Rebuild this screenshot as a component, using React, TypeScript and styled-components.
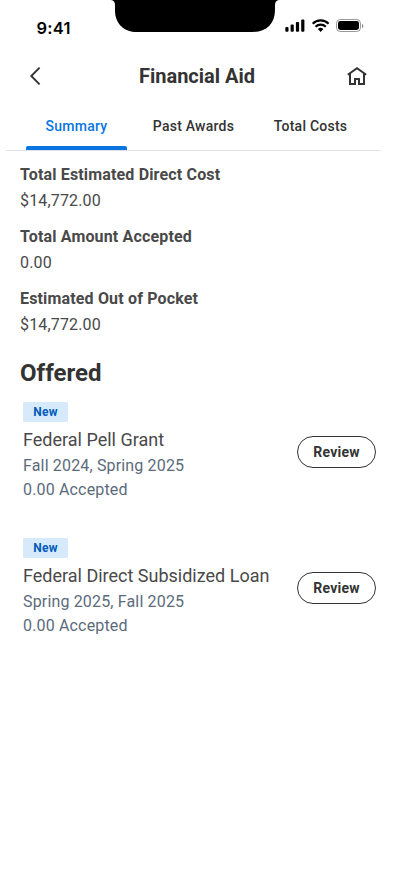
import React from "react";
import styled, { createGlobalStyle } from "styled-components";

const GlobalStyle = createGlobalStyle`
  *, *::before, *::after { box-sizing: border-box; }
  body { margin: 0; background: #fff; font-family: Roboto, sans-serif; color: #333; }
  h1, h2, p, dl, dt, dd, ul { margin: 0; padding: 0; }
  button { font-family: inherit; color: inherit; background: none; border: 0; padding: 0; }
`;

const Screen = styled.div`
  width: 402px;
  height: 874px;
  overflow: hidden;
  background: #fff;
`;

const StatusBar = styled.div`
  display: grid;
  grid-template-columns: 111px 168px 1fr;
  height: 50px;
`;

const Clock = styled.span`
  padding: 18px 0 0 36.5px;
  font: 600 16.5px/20px Inter, sans-serif;
  letter-spacing: 0.2px;
  color: #000;
`;

const StatusIcons = styled.svg`
  display: block;
  margin: 17px 0 0 5px;
`;

const Header = styled.header`
  display: grid;
  grid-template-columns: 24px 1fr 24px;
  align-items: center;
  height: 52px;
  padding: 0 33px 0 24px;
`;

const IconButton = styled.button`
  display: flex;
  width: 24px;
  height: 24px;
`;

const Title = styled.h1`
  padding-left: 1px;
  text-align: center;
  font-size: 20px;
  line-height: 28px;
  font-weight: 700;
`;

const Tabs = styled.nav`
  display: flex;
  height: 49px;
  width: 375px;
  margin-left: 6px;
  padding-left: 20px;
  border-bottom: 1px solid #dfe2ea;
`;

const Tab = styled.button<{ $active?: boolean; $width: number }>`
  display: flex;
  flex: none;
  flex-direction: column;
  align-items: center;
  justify-content: space-between;
  width: ${(p) => p.$width}px;
  padding-top: 12px;
  font-size: 14px;
  line-height: 24px;
  font-weight: 500;
  letter-spacing: 0.24px;
  color: ${(p) => (p.$active ? "#0875e1" : "#333")};

  &::after {
    content: "";
    width: 100%;
    height: 4px;
    border-radius: 2px 2px 0 0;
    background: ${(p) => (p.$active ? "#0875e1" : "transparent")};
  }
`;

const Totals = styled.dl`
  padding: 12px 20px 0;
`;

const Total = styled.div`
  height: 62px;
  font-size: 16px;
  line-height: 24px;
  letter-spacing: 0.16px;
  color: #494949;
`;

const TotalLabel = styled.dt`
  height: 26px;
  font-weight: 700;
`;

const TotalValue = styled.dd``;

const SectionTitle = styled.h2`
  margin: 8px 20px 0;
  font-size: 24px;
  line-height: 32px;
  font-weight: 700;
`;

const Awards = styled.ul`
  list-style: none;
  padding: 13px 26px 0 23px;
`;

const Award = styled.li`
  display: flex;
  justify-content: space-between;
  height: 136px;
`;

const AwardInfo = styled.div`
  white-space: nowrap;
`;

const Badge = styled.span`
  display: block;
  width: 45px;
  height: 20px;
  border-radius: 2px;
  background: #d7eafc;
  color: #005cb9;
  text-align: center;
  font-size: 12px;
  line-height: 20px;
  font-weight: 700;
  letter-spacing: 0.3px;
`;

const AwardName = styled.p`
  margin-top: 4px;
  font-size: 18px;
  line-height: 28px;
  color: #494949;
`;

const AwardDetail = styled.p`
  font-size: 16px;
  line-height: 24px;
  letter-spacing: 0.16px;
  color: #5b6b7b;
`;

const ReviewButton = styled.button`
  flex: none;
  width: 79px;
  height: 32px;
  margin-top: 34px;
  border: 1px solid #333;
  border-radius: 16px;
  font-size: 14px;
  line-height: 20px;
  font-weight: 700;
  letter-spacing: 0.24px;
`;

const totals = [
  { label: "Total Estimated Direct Cost", value: "$14,772.00" },
  { label: "Total Amount Accepted", value: "0.00" },
  { label: "Estimated Out of Pocket", value: "$14,772.00" },
];

const awards = [
  { name: "Federal Pell Grant", terms: "Fall 2024, Spring 2025" },
  { name: "Federal Direct Subsidized Loan", terms: "Spring 2025, Fall 2025" },
];

const Notch = () => (
  <svg width="168" height="32" viewBox="0 0 168 32">
    <path d="M0 0Q4 .5 4 5V10C4 24 13 32 26 32H142C155 32 164 24 164 10V5Q164 .5 168 0Z" fill="#000" />
  </svg>
);

const DeviceStatus = () => (
  <StatusIcons width="82" height="18" viewBox="0 0 82 18">
    <rect x="1.3" y="10" width="3.2" height="4.8" rx="1" />
    <rect x="6.6" y="7.5" width="3.2" height="7.3" rx="1" />
    <rect x="11.9" y="5" width="3.2" height="9.8" rx="1" />
    <rect x="17.2" y="2.5" width="3.2" height="12.3" rx="1" />
    <g fill="none" stroke="#000" strokeWidth="2.1">
      <path d="M28.7 6.7a11.2 11.2 0 0 1 15.9 0" />
      <path d="M31.5 9.8a7.2 7.2 0 0 1 10.3 0" />
    </g>
    <path d="M33.9 12.1a3.9 3.9 0 0 1 5.5 0L36.65 15Z" />
    <rect x="52.5" y="2.5" width="24" height="12" rx="3.8" fill="none" stroke="#000" strokeOpacity=".4" />
    <rect x="54" y="4" width="21" height="9" rx="2.4" />
    <path d="M78 7v4c1-.4 1.4-1.1 1.4-2S79 7.4 78 7Z" opacity=".45" />
  </StatusIcons>
);

export default function App() {
  return (
    <Screen>
      <GlobalStyle />
      <StatusBar>
        <Clock>9:41</Clock>
        <Notch />
        <DeviceStatus />
      </StatusBar>
      <Header>
        <IconButton aria-label="Back">
          <svg width="24" height="24" viewBox="0 0 24 24" fill="none" stroke="#333" strokeWidth="1.9">
            <path d="M15.6 3.7 7.3 12l8.3 8.3" />
          </svg>
        </IconButton>
        <Title>Financial Aid</Title>
        <IconButton aria-label="Home">
          <svg width="24" height="24" viewBox="0 0 24 24" fill="none" stroke="#333" strokeWidth="2">
            <path d="M2.8 10.8 12 4.2l9.2 6.6M5 9.4V20h5v-5h4v5h5V9.4" />
          </svg>
        </IconButton>
      </Header>
      <Tabs>
        <Tab $active $width={101}>Summary</Tab>
        <Tab $width={133}>Past Awards</Tab>
        <Tab $width={101}>Total Costs</Tab>
      </Tabs>
      <Totals>
        {totals.map((t) => (
          <Total key={t.label}>
            <TotalLabel>{t.label}</TotalLabel>
            <TotalValue>{t.value}</TotalValue>
          </Total>
        ))}
      </Totals>
      <SectionTitle>Offered</SectionTitle>
      <Awards>
        {awards.map((a) => (
          <Award key={a.name}>
            <AwardInfo>
              <Badge>New</Badge>
              <AwardName>{a.name}</AwardName>
              <AwardDetail>{a.terms}</AwardDetail>
              <AwardDetail>0.00 Accepted</AwardDetail>
            </AwardInfo>
            <ReviewButton>Review</ReviewButton>
          </Award>
        ))}
      </Awards>
    </Screen>
  );
}
